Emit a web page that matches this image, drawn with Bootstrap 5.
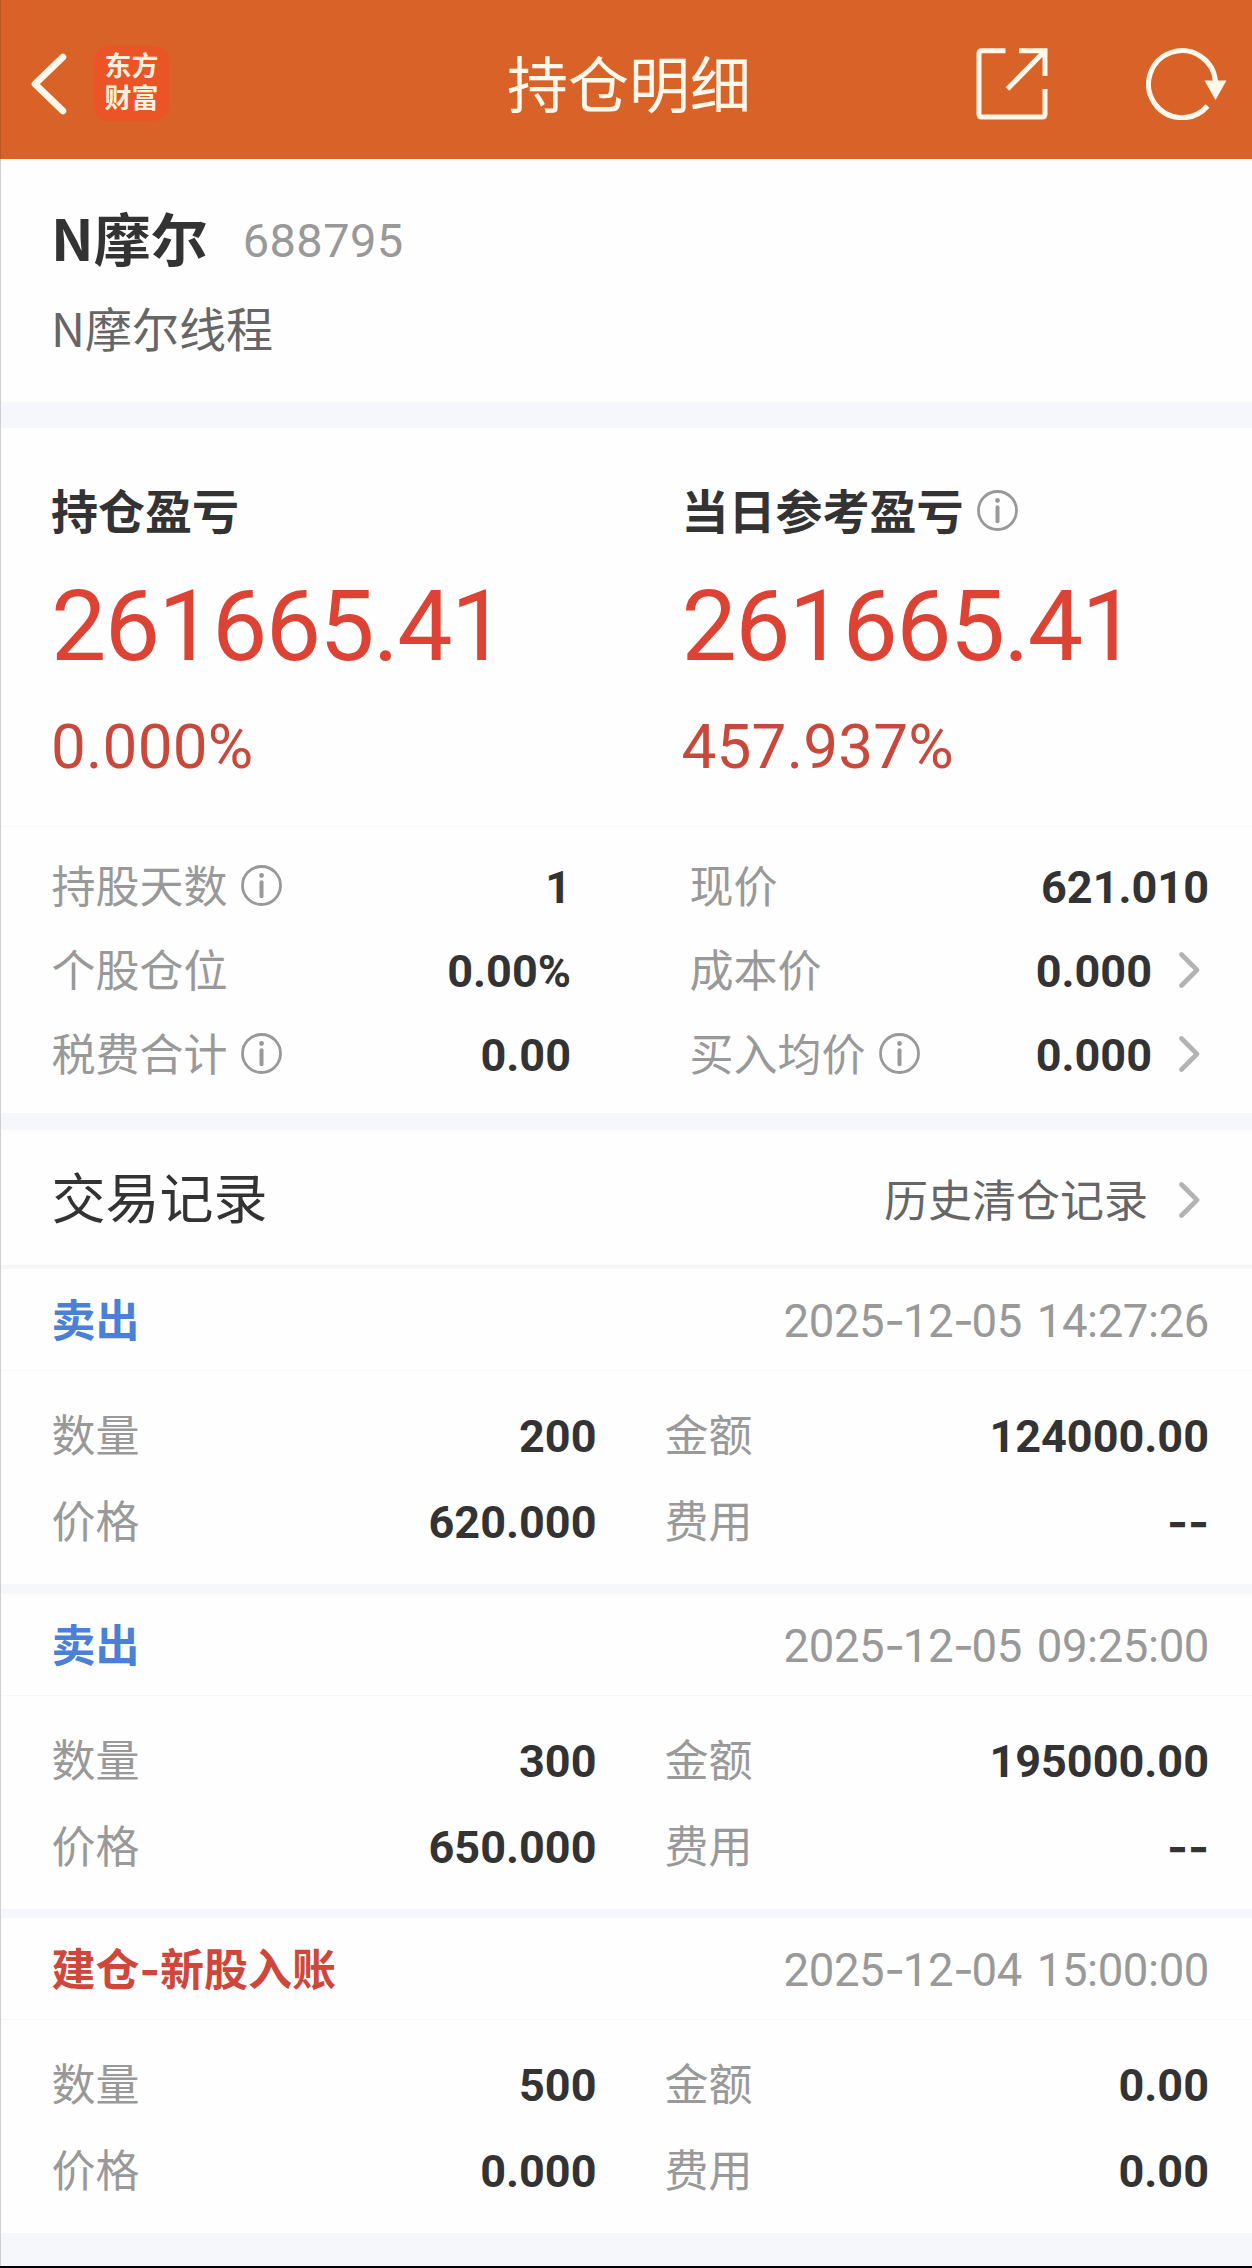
<!DOCTYPE html>
<html lang="zh-CN">
<head>
<meta charset="utf-8">
<meta name="viewport" content="width=device-width, initial-scale=1">
<title>持仓明细</title>
<link href="https://cdn.jsdelivr.net/npm/bootstrap@5.3.0/dist/css/bootstrap.min.css" rel="stylesheet">
<style>
  body { font-family: "Noto Sans CJK SC", sans-serif; color: #333; background: #fefefe; font-size: 44px; }
  .page { border-left: 1px solid #cfcfcf; height: 2266px; }
  .page-wrap { border-bottom: 2px solid #000; }
  .topbar { height: 159px; background: #d96228; color: #fff8ea; margin-left: -1px; padding: 0 25px 0 30px; border-left: 1px solid #bb5724; }
  .topbar h1 { font-size: 61px; line-height: 80px; font-weight: 400; padding-top: 4px; }
  .side { flex: 1 1 0; }
  .back { margin-right: 27px; }
  .share { margin-right: 98px; }
  .logo { width: 75px; height: 75px; border-radius: 15px; background: #eb5427; color: #fff0de; font-size: 27px; line-height: 32px; font-weight: 700; padding-top: 3px; }
  .num { font-family: Roboto, "Noto Sans CJK SC", sans-serif; }
  .dash { font-family: Inter, sans-serif; }
  .stock { height: 243px; padding: 37px 50px 0; }
  .stock-line { height: 80px; line-height: 80px; }
  .stock-name { font-size: 57px; }
  .stock-code { font-size: 47px; line-height: 1; color: #999; margin-left: 35px; letter-spacing: .4px; vertical-align: 4px; }
  .stock-sub { font-size: 47px; line-height: 70px; color: #666; margin-top: 16px; }
  .band { background: #f6f7fa; }
  .band-a { height: 26px; } .band-b { height: 17px; } .band-c { height: 10px; } .band-d { height: 9px; } .band-e { height: 33px; }
  .profit { height: 399px; padding: 40px 0 0 50px; border-bottom: 1px solid #f7f7f8; }
  .profit-col { flex: 0 0 630.5px; }
  .profit-col + .profit-col { flex: 1 1 0; min-width: 0; }
  .profit-title { font-size: 47px; line-height: 80px; height: 80px; padding-top: 2px; }
  .profit-title svg { margin: 3px 0 0 13px; }
  .profit-big { font-size: 98.5px; line-height: 120px; margin-top: 19px; letter-spacing: -1.7px; color: #dc4335; }
  .profit-pct { font-size: 62px; line-height: 120px; color: #c9483c; letter-spacing: .2px; }
  .info { height: 286px; padding: 14.5px 43px 0 50.5px; }
  .info-row { height: 84px; line-height: 84px; }
  .info-left { width: 519.5px; margin-right: 118.500px; }
  .lbl { color: #999; white-space: nowrap; }
  .lbl svg { margin: -11px 0 0 13px; }
  .val { font-weight: 700; font-size: 45px; }
  .arrow { margin-left: 27px; margin-right: 9px; margin-top: 4px; }
  .rec-title { height: 139px; padding: 0 43px 3px 50.5px; border-bottom: 4px solid #f6f6f7; }
  .rec-title h2 { font-size: 54px; line-height: 80px; font-weight: 400; }
  .rec-more { color: #666; padding-top: 3px; }
  .rec-more .arrow { margin-left: 31px; }
  .rec-head { height: 102px; padding: 4px 43px 0 50.5px; border-bottom: 1px solid #f7f7f8; line-height: 90px; }
  .rec-kind { font-weight: 700; }
  .buy { color: #cf463a; }
  .sell { color: #4a80d6; }
  .rec-time { color: #999; font-size: 45.5px; letter-spacing: -.4px; word-spacing: 4px; }
  .rec-time .dash { letter-spacing: -2.5px; }
  .rec-body { height: 213px; padding: 18.5px 43px 0 50.5px; }
  .rec-row { height: 86px; line-height: 86px; }
  .rec-left { width: 545px; margin-right: 68px; }
</style>
</head>
<body>
<svg class="d-none">
  <symbol id="info" viewBox="0 0 41 41"><circle cx="20.5" cy="20.5" r="19" fill="none" stroke="#999" stroke-width="2.8"/><circle cx="20.5" cy="10.5" r="2.4" fill="#999"/><path d="M20.5 17.2v14" stroke="#999" stroke-width="4" stroke-linecap="round"/></symbol>
  <symbol id="next" viewBox="0 0 21 36"><path d="M2.5 2.5 18 18 2.5 33.5" fill="none" stroke="#b3b3b3" stroke-width="4.6" stroke-linecap="round" stroke-linejoin="round"/></symbol>
</svg>
<div class="page-wrap">
<div class="page">
  <header class="topbar d-flex align-items-center">
    <div class="side d-flex align-items-center pt-2">
      <svg class="back" width="36" height="62" viewBox="0 0 36 62"><path d="M32 4 4 31l28 27" fill="none" stroke="#fff8ea" stroke-width="6.600" stroke-linecap="round" stroke-linejoin="round"/></svg>
      <div class="logo text-center">东方<br>财富</div>
    </div>
    <h1 class="m-0">持仓明细</h1>
    <div class="side d-flex justify-content-end align-items-center pt-2">
      <svg class="share" width="72" height="72" viewBox="0 0 72 72" fill="none" stroke="#fff8ea" stroke-width="5"><path d="M29.500 2.800H6q-3 0-3 3V66q0 3 3 3H66q3 0 3-3V41M43 2.800H69V28M69 2.800 31.500 41"/></svg>
      <svg width="81" height="72" viewBox="0 0 81 72"><path d="M61.500 58A33.500 33.500 0 1 1 69.500 34" fill="none" stroke="#fff8ea" stroke-width="5"/><path d="M58.500 32.500H80.500L69.500 52z" fill="#fff8ea"/></svg>
    </div>
  </header>

  <section class="stock">
    <div class="stock-line"><span class="stock-name fw-bold">N摩尔</span><span class="stock-code num">688795</span></div>
    <div class="stock-sub">N摩尔线程</div>
  </section>
  <div class="band band-a"></div>

  <section class="profit d-flex">
    <div class="profit-col">
      <div class="profit-title fw-bold d-flex align-items-center">持仓盈亏</div>
      <div class="profit-big num">261665.41</div>
      <div class="profit-pct num">0.000%</div>
    </div>
    <div class="profit-col">
      <div class="profit-title fw-bold d-flex align-items-center">当日参考盈亏<svg width="41" height="41"><use href="#info"/></svg></div>
      <div class="profit-big num">261665.41</div>
      <div class="profit-pct num">457.937%</div>
    </div>
  </section>

  <section class="info">
    <div class="info-row d-flex">
      <div class="info-left d-flex align-items-baseline justify-content-between"><span class="lbl">持股天数<svg width="41" height="41"><use href="#info"/></svg></span><span class="val num">1</span></div>
      <div class="flex-grow-1 d-flex align-items-baseline justify-content-between"><span class="lbl">现价</span><span class="val num">621.010</span></div>
    </div>
    <div class="info-row d-flex">
      <div class="info-left d-flex align-items-baseline justify-content-between"><span class="lbl">个股仓位</span><span class="val num">0.00%</span></div>
      <div class="flex-grow-1 d-flex align-items-baseline"><span class="lbl me-auto">成本价</span><span class="val num">0.000</span><svg class="arrow align-self-center" width="21" height="36"><use href="#next"/></svg></div>
    </div>
    <div class="info-row d-flex">
      <div class="info-left d-flex align-items-baseline justify-content-between"><span class="lbl">税费合计<svg width="41" height="41"><use href="#info"/></svg></span><span class="val num">0.00</span></div>
      <div class="flex-grow-1 d-flex align-items-baseline"><span class="lbl me-auto">买入均价<svg width="41" height="41"><use href="#info"/></svg></span><span class="val num">0.000</span><svg class="arrow align-self-center" width="21" height="36"><use href="#next"/></svg></div>
    </div>
  </section>
  <div class="band band-b"></div>

  <section class="rec-title d-flex align-items-center">
    <h2 class="m-0 me-auto">交易记录</h2>
    <div class="rec-more d-flex align-items-center">历史清仓记录<svg class="arrow" width="21" height="36"><use href="#next"/></svg></div>
  </section>

  <article>
    <div class="rec-head d-flex align-items-baseline justify-content-between"><span class="rec-kind sell">卖出</span><span class="rec-time num">2025<span class="dash">-</span>12<span class="dash">-</span>05 14:27:26</span></div>
    <div class="rec-body">
      <div class="rec-row d-flex">
        <div class="rec-left d-flex align-items-baseline justify-content-between"><span class="lbl">数量</span><span class="val num">200</span></div>
        <div class="flex-grow-1 d-flex align-items-baseline justify-content-between"><span class="lbl">金额</span><span class="val num">124000.00</span></div>
      </div>
      <div class="rec-row d-flex">
        <div class="rec-left d-flex align-items-baseline justify-content-between"><span class="lbl">价格</span><span class="val num">620.000</span></div>
        <div class="flex-grow-1 d-flex align-items-baseline justify-content-between"><span class="lbl">费用</span><span class="val dash">--</span></div>
      </div>
    </div>
  </article>
  <div class="band band-c"></div>

  <article>
    <div class="rec-head d-flex align-items-baseline justify-content-between"><span class="rec-kind sell">卖出</span><span class="rec-time num">2025<span class="dash">-</span>12<span class="dash">-</span>05 09:25:00</span></div>
    <div class="rec-body">
      <div class="rec-row d-flex">
        <div class="rec-left d-flex align-items-baseline justify-content-between"><span class="lbl">数量</span><span class="val num">300</span></div>
        <div class="flex-grow-1 d-flex align-items-baseline justify-content-between"><span class="lbl">金额</span><span class="val num">195000.00</span></div>
      </div>
      <div class="rec-row d-flex">
        <div class="rec-left d-flex align-items-baseline justify-content-between"><span class="lbl">价格</span><span class="val num">650.000</span></div>
        <div class="flex-grow-1 d-flex align-items-baseline justify-content-between"><span class="lbl">费用</span><span class="val dash">--</span></div>
      </div>
    </div>
  </article>
  <div class="band band-d"></div>

  <article>
    <div class="rec-head d-flex align-items-baseline justify-content-between"><span class="rec-kind buy">建仓<span class="dash">-</span>新股入账</span><span class="rec-time num">2025<span class="dash">-</span>12<span class="dash">-</span>04 15:00:00</span></div>
    <div class="rec-body">
      <div class="rec-row d-flex">
        <div class="rec-left d-flex align-items-baseline justify-content-between"><span class="lbl">数量</span><span class="val num">500</span></div>
        <div class="flex-grow-1 d-flex align-items-baseline justify-content-between"><span class="lbl">金额</span><span class="val num">0.00</span></div>
      </div>
      <div class="rec-row d-flex">
        <div class="rec-left d-flex align-items-baseline justify-content-between"><span class="lbl">价格</span><span class="val num">0.000</span></div>
        <div class="flex-grow-1 d-flex align-items-baseline justify-content-between"><span class="lbl">费用</span><span class="val num">0.00</span></div>
      </div>
    </div>
  </article>
  <div class="band band-e"></div>
</div>
</div>
<script src="https://cdn.jsdelivr.net/npm/bootstrap@5.3.0/dist/js/bootstrap.bundle.min.js"></script>
</body>
</html>
